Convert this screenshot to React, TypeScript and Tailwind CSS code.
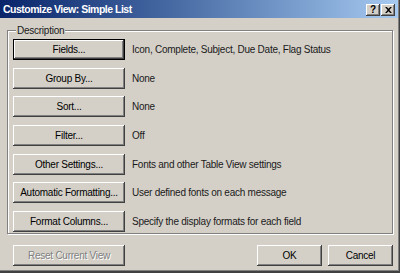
import React from 'react';

const rows = [
  { label: 'Fields...', desc: 'Icon, Complete, Subject, Due Date, Flag Status', isDefault: true },
  { label: 'Group By...', desc: 'None' },
  { label: 'Sort...', desc: 'None' },
  { label: 'Filter...', desc: 'Off' },
  { label: 'Other Settings...', desc: 'Fonts and other Table View settings' },
  { label: 'Automatic Formatting...', desc: 'User defined fonts on each message' },
  { label: 'Format Columns...', desc: 'Specify the display formats for each field' },
];

// classic raised 3D edge
const raised =
  'shadow-[inset_-1px_-1px_#404040,inset_1px_1px_#ffffff,inset_-2px_-2px_#808080,inset_2px_2px_#d4d0c8]';

const ClassicButton: React.FC<{ children: React.ReactNode; width: string; isDefault?: boolean; disabled?: boolean }> = ({
  children,
  width,
  isDefault,
  disabled,
}) => (
  <div
    className={`${width} h-[21px] shrink-0 flex items-center justify-center whitespace-nowrap bg-[#d4d0c8] ${
      isDefault
        ? 'border border-black shadow-[inset_-1px_-1px_#404040,inset_1px_1px_#ffffff,inset_-2px_-2px_#808080]'
        : raised
    } ${disabled ? 'text-[#808080] [text-shadow:1px_1px_0_#ffffff]' : 'text-black'}`}
  >
    {children}
  </div>
);

const TitleButton: React.FC<{ children: React.ReactNode }> = ({ children }) => (
  <div className={`w-[14px] h-[12px] flex items-center justify-center bg-[#d4d0c8] ${raised}`}>{children}</div>
);

export default function App() {
  return (
    <div className="w-[400px] h-[273px] overflow-hidden bg-[#d4d0c8] font-['Tahoma','Liberation_Sans',sans-serif] text-[10px] leading-[13px] tracking-[-0.25px] text-[#1a1a1a]">
      <div className="w-[400px] h-[273px] flex flex-col border-r border-b-2 border-r-[#404040] border-b-[#404040] shadow-[inset_-1px_-1px_#808080]">
        {/* title bar */}
        <div className="h-[18px] shrink-0 mr-[1px] flex items-center pl-[3px] pr-[3px] bg-gradient-to-r from-[#0a246a] to-[#a6caf0]">
          <span className="text-white font-bold text-[10.5px] tracking-[-0.5px] whitespace-nowrap">Customize View: Simple List</span>
          <div className="ml-auto flex gap-[1px] mt-[1px]">
            <TitleButton>
              <span className="font-bold text-[10px] leading-none text-black">?</span>
            </TitleButton>
            <TitleButton>
              <svg width="7" height="6" viewBox="0 0 8 7">
                <path d="M0 0h2l2 2 2-2h2L5 3.5 8 7H6L4 5 2 7H0l3-3.5z" fill="#000" />
              </svg>
            </TitleButton>
          </div>
        </div>

        {/* group box */}
        <fieldset className="mt-[6px] ml-[7px] w-[386px] h-[210px] border border-[#808080] shadow-[inset_1px_1px_#ffffff,1px_1px_#ffffff] px-[5px] pt-[2px]">
          <legend className="ml-[3px] px-[1px] bg-[#d4d0c8] leading-[13px]">Description</legend>
          <div className="flex flex-col gap-[7.67px]">
            {rows.map((r) => (
              <div key={r.label} className="flex items-center gap-[7px]">
                <ClassicButton width="w-[112px]" isDefault={r.isDefault}>
                  {r.label}
                </ClassicButton>
                <span className="whitespace-nowrap">{r.desc}</span>
              </div>
            ))}
          </div>
        </fieldset>

        {/* bottom buttons */}
        <div className="mt-[11px] flex pl-[13px] pr-[6px]">
          <ClassicButton width="w-[112px]" disabled>
            Reset Current View
          </ClassicButton>
          <div className="ml-auto flex gap-[6px]">
            <ClassicButton width="w-[65px]">OK</ClassicButton>
            <ClassicButton width="w-[65px]">Cancel</ClassicButton>
          </div>
        </div>
      </div>
    </div>
  );
}
